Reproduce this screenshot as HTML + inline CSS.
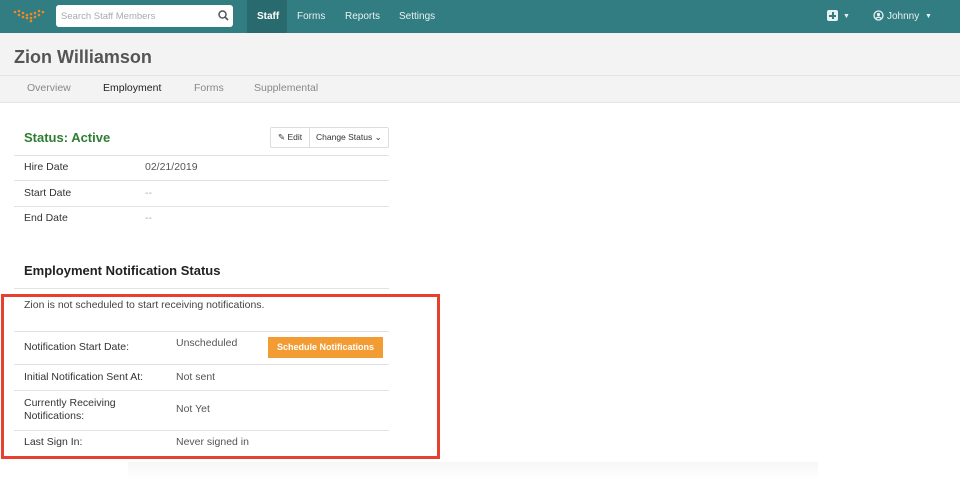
<!DOCTYPE html>
<html><head><style>
*{box-sizing:border-box;margin:0;padding:0}
body{width:960px;height:479px;overflow:hidden;background:#fff;font-family:"Liberation Sans",sans-serif;color:#333;position:relative}
.nav{position:absolute;left:0;top:0;width:960px;height:33px;background:#327d81}
.nav .t{position:absolute;top:11px;font-size:10px;color:#e8f2f2}
.abs{position:absolute}
.hdr{position:absolute;left:0;top:33px;width:960px;height:70px;background:#f3f3f3;border-bottom:1px solid #e4e4e4}
.row{position:absolute;left:14px;width:375px;border-top:1px solid #e2e2e2}
.f{font-size:10.5px;position:absolute}
</style></head><body>
<div class="nav">
  <svg class="abs" style="left:13px;top:9px" width="34" height="14">
    <g fill="#f08a24">
    <circle cx="2" cy="3" r="1.3"/><circle cx="6" cy="2" r="1.3"/><circle cx="10" cy="4" r="1.3"/><circle cx="14" cy="6" r="1.3"/><circle cx="18" cy="5" r="1.3"/><circle cx="22" cy="4" r="1.3"/><circle cx="26" cy="2" r="1.3"/><circle cx="30" cy="3" r="1.3"/>
    <circle cx="6" cy="6" r="1.3"/><circle cx="10" cy="8" r="1.3"/><circle cx="14" cy="9" r="1.3"/><circle cx="18" cy="9" r="1.3"/><circle cx="22" cy="8" r="1.3"/><circle cx="26" cy="6" r="1.3"/><circle cx="18" cy="12" r="1.3"/></g>
  </svg>
  <div class="abs" style="left:56px;top:5px;width:177px;height:22px;background:#fff;border-radius:3px"></div>
  <div class="abs" style="left:61px;top:11px;font-size:9.5px;color:#aaa">Search Staff Members</div>
  <svg class="abs" style="left:218px;top:10px" width="11" height="11"><circle cx="4.5" cy="4.5" r="3.5" stroke="#555" stroke-width="1.5" fill="none"/><line x1="7" y1="7" x2="10" y2="10" stroke="#555" stroke-width="1.6"/></svg>
  <div class="abs" style="left:247px;top:0;width:40px;height:33px;background:#286a6d"></div>
  <div class="t" style="left:257px;color:#fff;font-weight:bold">Staff</div>
  <div class="t" style="left:297px">Forms</div>
  <div class="t" style="left:345px">Reports</div>
  <div class="t" style="left:399px">Settings</div>
  <div class="abs" style="left:827px;top:10px;width:11px;height:11px;background:#e8f2f2;border-radius:2px"></div>
  <div class="abs" style="left:829px;top:14.5px;width:7px;height:2px;background:#327d81"></div>
  <div class="abs" style="left:831.5px;top:12px;width:2px;height:7px;background:#327d81"></div>
  <div class="t" style="left:843px;font-size:7px;top:13px">▼</div>
  <svg class="abs" style="left:873px;top:10px" width="11" height="11"><circle cx="5.5" cy="5.5" r="4.5" stroke="#e8f2f2" stroke-width="1.3" fill="none"/><circle cx="5.5" cy="4.5" r="1.6" fill="#e8f2f2"/><path d="M2.8 8.5 Q5.5 5.8 8.2 8.5" stroke="#e8f2f2" stroke-width="1.3" fill="none"/></svg>
  <div class="t" style="left:887px">Johnny</div>
  <div class="t" style="left:925px;font-size:7px;top:13px">▼</div>
</div>
<div class="hdr">
  <div class="abs" style="left:14px;top:14px;font-size:18px;font-weight:bold;color:#555">Zion Williamson</div>
  <div class="abs" style="left:0;top:42px;width:960px;border-top:1px solid #e4e4e4"></div>
  <div class="abs" style="left:27px;top:49px;font-size:10.5px;color:#888">Overview</div>
  <div class="abs" style="left:103px;top:49px;font-size:10.5px;color:#222">Employment</div>
  <div class="abs" style="left:194px;top:49px;font-size:10.5px;color:#888">Forms</div>
  <div class="abs" style="left:254px;top:49px;font-size:10.5px;color:#888">Supplemental</div>
</div>
<div class="abs" style="left:24px;top:130px;font-size:13px;font-weight:bold;color:#2e7d32">Status: Active</div>
<div class="abs" style="left:270px;top:127px;width:119px;height:21px;border:1px solid #ddd;border-radius:2px;background:#fff"></div>
<div class="abs" style="left:309px;top:127px;height:21px;border-left:1px solid #ddd"></div>
<div class="abs" style="left:278px;top:132px;font-size:8.5px;color:#333">✎ Edit</div>
<div class="abs" style="left:316px;top:132px;font-size:8.5px;color:#333">Change Status ⌄</div>
<div class="row" style="top:155px"></div>
<div class="f" style="left:24px;top:161px">Hire Date</div><div class="f" style="left:145px;top:161px;color:#555">02/21/2019</div>
<div class="row" style="top:180px"></div>
<div class="f" style="left:24px;top:187px">Start Date</div><div class="f" style="left:145px;top:187px;color:#aaa">--</div>
<div class="row" style="top:206px"></div>
<div class="f" style="left:24px;top:212px">End Date</div><div class="f" style="left:145px;top:212px;color:#aaa">--</div>
<div class="abs" style="left:24px;top:263px;font-size:13px;font-weight:bold;color:#222">Employment Notification Status</div>
<div class="row" style="top:288px"></div>
<div class="abs" style="left:128px;top:462px;width:690px;height:17px;background:linear-gradient(#f6f6f6,#fff)"></div>
<div class="abs" style="left:1px;top:294px;width:439px;height:165px;border:3px solid #e8402f"></div>
<div class="f" style="left:24px;top:299px;color:#444">Zion is not scheduled to start receiving notifications.</div>
<div class="row" style="top:331px"></div>
<div class="f" style="left:24px;top:341px">Notification Start Date:</div>
<div class="f" style="left:176px;top:337px;color:#555">Unscheduled</div>
<div class="abs" style="left:268px;top:337px;width:115px;height:21px;background:#f29c33;color:#fff;font-size:9px;font-weight:bold;text-align:center;line-height:21px">Schedule Notifications</div>
<div class="row" style="top:364px"></div>
<div class="f" style="left:24px;top:371px">Initial Notification Sent At:</div>
<div class="f" style="left:176px;top:371px;color:#555">Not sent</div>
<div class="row" style="top:390px"></div>
<div class="f" style="left:24px;top:397px;line-height:13px">Currently Receiving<br>Notifications:</div>
<div class="f" style="left:176px;top:403px;color:#555">Not Yet</div>
<div class="row" style="top:430px"></div>
<div class="f" style="left:24px;top:436px">Last Sign In:</div>
<div class="f" style="left:176px;top:436px;color:#555">Never signed in</div>
</body></html>
